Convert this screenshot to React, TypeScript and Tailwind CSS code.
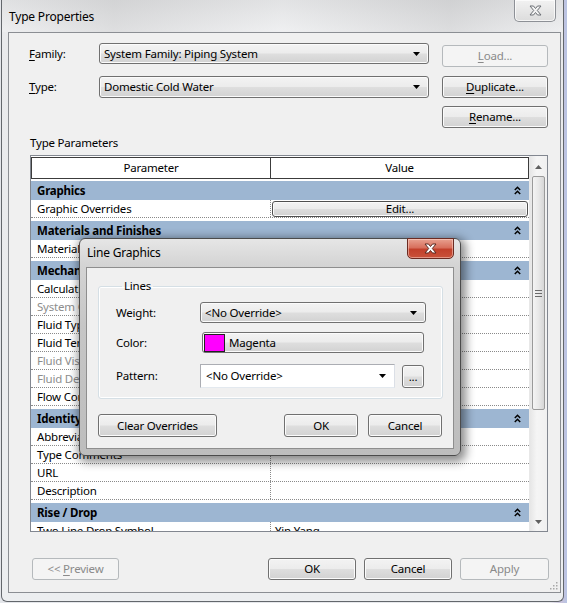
import React from "react";

const btn =
  "flex items-center justify-center rounded-[3px] border border-[#707070] bg-[linear-gradient(#f3f3f3_0%,#ececec_48%,#dedede_52%,#d2d2d2_100%)] shadow-[inset_0_0_0_1px_#fbfbfb] text-black";
const btnDisabled =
  "flex items-center justify-center rounded-[3px] border border-[#b5b9bc] bg-[#f4f4f4] text-[#8a8a8a]";
const combo =
  "flex items-center rounded-[3px] border border-[#707070] bg-[linear-gradient(#f3f3f3_0%,#ececec_48%,#dedede_52%,#d2d2d2_100%)] shadow-[inset_0_0_0_1px_#fbfbfb] text-black";

function Arrow() {
  return (
    <svg width="7" height="4" viewBox="0 0 7 4" className="shrink-0">
      <path d="M0 0 L7 0 L3.5 4 Z" fill="#000" />
    </svg>
  );
}

function Chevrons() {
  return (
    <svg width="7" height="9" viewBox="0 0 7 9" className="shrink-0">
      <path d="M0.8 4 L3.5 1.3 L6.2 4" fill="none" stroke="#000" strokeWidth="1.5" />
      <path d="M0.8 8 L3.5 5.3 L6.2 8" fill="none" stroke="#000" strokeWidth="1.5" />
    </svg>
  );
}

type Row = { name: string; value?: string; gray?: boolean; edit?: boolean };
type Group = { title: string; rows: Row[] };

const groups: Group[] = [
  { title: "Graphics", rows: [{ name: "Graphic Overrides", edit: true }] },
  { title: "Materials and Finishes", rows: [{ name: "Material", value: "<By Category>" }] },
  {
    title: "Mechanical",
    rows: [
      { name: "Calculations", value: "All" },
      { name: "System Classification", value: "Domestic Cold Water", gray: true },
      { name: "Fluid Type", value: "Water" },
      { name: "Fluid Temperature", value: "60 °F" },
      { name: "Fluid Viscosity", value: "0.00076 lbm/(ft·s)", gray: true },
      { name: "Fluid Density", value: "62.3663 lb/ft³", gray: true },
      { name: "Flow Conversion Method", value: "Predominantly Flush Tanks" },
    ],
  },
  {
    title: "Identity Data",
    rows: [
      { name: "Abbreviation", value: "" },
      { name: "Type Comments", value: "" },
      { name: "URL", value: "" },
      { name: "Description", value: "" },
    ],
  },
  { title: "Rise / Drop", rows: [{ name: "Two Line Drop Symbol", value: "Yin Yang" }] },
];

function CloseX({ fill, stroke }: { fill: string; stroke: string }) {
  return (
    <svg width="13" height="11" viewBox="0 0 13 11">
      <path
        d="M1 1 L4.5 1 L6.5 3.5 L8.5 1 L12 1 L8.3 5.5 L12 10 L8.5 10 L6.5 7.5 L4.5 10 L1 10 L4.7 5.5 Z"
        fill={fill}
        stroke={stroke}
        strokeWidth="1"
        strokeLinejoin="round"
      />
    </svg>
  );
}

function Table() {
  return (
    <div className="ml-[21px] mt-[4px] flex h-[377px] w-[518px] overflow-hidden border border-[#828790] bg-white">
      <div className="flex w-[498px] flex-col pt-[1px]">
        <div className="flex h-[22px] shrink-0 border border-[#3c3c3c] bg-white">
          <div className="flex w-[239px] items-center justify-center border-r border-[#3c3c3c]">Parameter</div>
          <div className="flex flex-1 items-center justify-center">Value</div>
        </div>
        {groups.map((g, gi) => (
          <div key={g.title} className={gi === 0 ? "pt-[2px]" : "pt-[3px]"}>
            <div className="flex h-[19px] items-center justify-between bg-[#9db6d2] pl-[6px] pr-[8px] font-bold">
              <span>{g.title}</span>
              <Chevrons />
            </div>
            {g.rows.map((r) => (
              <div key={r.name} className="flex h-[18px] border-b border-dotted border-[#8a8a8a]">
                <div
                  className={
                    "flex w-[240px] items-center overflow-hidden whitespace-nowrap border-r border-dotted border-[#8a8a8a] pl-[6px] " +
                    (r.gray ? "text-[#8d8d8d]" : "text-black")
                  }
                >
                  {r.name}
                </div>
                <div className="flex flex-1 items-center overflow-hidden whitespace-nowrap">
                  {r.edit ? (
                    <div className="flex h-full w-full p-[1px] pb-0">
                      <div className="flex flex-1 items-center justify-center rounded-[3px] border border-[#505050] bg-[linear-gradient(#f3f3f3_0%,#ececec_48%,#dedede_52%,#d2d2d2_100%)] shadow-[inset_0_0_0_1px_#fbfbfb]">
                        Edit...
                      </div>
                    </div>
                  ) : (
                    <span className={"pl-[4px] " + (r.gray ? "text-[#8d8d8d]" : "")}>{r.value}</span>
                  )}
                </div>
              </div>
            ))}
          </div>
        ))}
      </div>
      {/* scrollbar */}
      <div className="flex w-[18px] flex-col border-l border-[#e8e8e8] bg-[linear-gradient(90deg,#e6e6e6,#f5f5f5_40%,#f0f0f0)]">
        <div className="flex h-[20px] items-center justify-center pt-[2px]">
          <svg width="7" height="4" viewBox="0 0 7 4">
            <path d="M0 4 L7 4 L3.5 0 Z" fill="#606060" />
          </svg>
        </div>
        <div className="mx-[2px] flex h-[234px] items-center justify-center rounded-[2px] border border-[#9a9a9a] bg-[linear-gradient(90deg,#f4f4f4,#e8e8e8_50%,#d6d6d6)]">
          <svg width="7" height="7" viewBox="0 0 7 7">
            <path d="M0 0.5 H7 M0 3.5 H7 M0 6.5 H7" stroke="#6a6a6a" strokeWidth="1" />
          </svg>
        </div>
        <div className="flex flex-1 items-end justify-center pb-[7px]">
          <svg width="7" height="4" viewBox="0 0 7 4">
            <path d="M0 0 L7 0 L3.5 4 Z" fill="#606060" />
          </svg>
        </div>
      </div>
    </div>
  );
}

function LineGraphics() {
  return (
    <div className="absolute left-[79px] top-[238px] flex h-[218px] w-[382px] flex-col rounded-[6px] border border-[#4b4b4b] bg-[linear-gradient(180deg,#e6e6e6_0%,#d4d4d4_12%,#c6c6c6_40%,#bdbdbd_100%)] shadow-[2px_3px_10px_3px_rgba(0,0,0,0.45)]">
      <div className="relative flex h-[28px] shrink-0 items-center pl-[7px]">
        <span className="text-[12px]">Line Graphics</span>
        <div className="absolute right-[6px] top-[-1px] flex h-[21px] w-[47px] items-center justify-center rounded-b-[5px] border border-[#6b2b22] bg-[linear-gradient(#e8a190_0%,#d8705d_45%,#c2402b_55%,#c9523a_100%)] shadow-[inset_0_0_0_1px_rgba(255,220,210,0.5)]">
          <CloseX fill="#ffffff" stroke="#5a2a22" />
        </div>
      </div>
      <div className="mx-[6px] flex h-[182px] flex-col border border-[#8e8e8e] bg-[#f0f0f0] px-[11px]">
        <fieldset className="mt-[10px] h-[121px] rounded-[3px] border border-[#d5dfe5] pl-[17px] pr-[16px] shadow-[inset_0_0_0_1px_#ffffff]">
          <legend className="ml-[6px] px-[2px] leading-[16px]">Lines</legend>
          <div className="grid grid-cols-[84px_1fr] items-center">
            <div className="mt-[8px]">Weight:</div>
            <div className={combo + " mt-[8px] h-[21px] w-[226px] justify-between pl-[4px] pr-[8px]"}>
              <span>&lt;No Override&gt;</span>
              <Arrow />
            </div>
            <div className="mt-[9px]">Color:</div>
            <div className={combo + " ml-[2px] mt-[9px] h-[21px] w-[222px] pl-[1px]"}>
              <div className="h-[18px] w-[21px] border border-[#222] bg-[#ff00ff]" />
              <span className="ml-[4px]">Magenta</span>
            </div>
            <div className="mt-[11px]">Pattern:</div>
            <div className="mt-[11px] flex items-center">
              <div className="flex h-[24px] w-[195px] items-center justify-between border border-[#abadb3] border-b-[#e3e9ef] border-r-[#dbdfe6] bg-white pl-[5px] pr-[8px]">
                <span>&lt;No Override&gt;</span>
                <Arrow />
              </div>
              <div className={btn + " ml-[7px] h-[23px] w-[22px] items-end pb-[4px] leading-none"}>...</div>
            </div>
          </div>
        </fieldset>
        <div className="mt-[15px] flex">
          <div className={btn + " h-[23px] w-[119px]"}>Clear Overrides</div>
          <div className={btn + " ml-auto h-[23px] w-[74px]"}>OK</div>
          <div className={btn + " ml-[10px] h-[23px] w-[74px]"}>Cancel</div>
        </div>
      </div>
    </div>
  );
}

export default function App() {
  return (
    <div className="relative h-[603px] w-[567px] overflow-hidden bg-[linear-gradient(90deg,#e4e6ea_0%,#e8e9ec_97%,#c9c3dc_99%,#b8c4e4_100%)] font-['Noto_Sans',sans-serif] text-[11.5px] tracking-[-0.2px] text-black">
      <div className="ml-[1px] flex h-[602px] w-[563px] flex-col rounded-b-[6px] border border-t-0 border-[#63676c] bg-[linear-gradient(180deg,#d8d9db_0%,#e9eaec_5%,#eceef0_100%)]">
        {/* title bar */}
        <div className="relative flex h-[32px] shrink-0 items-center bg-[linear-gradient(90deg,rgba(255,255,255,0.2),rgba(200,200,200,0.35)_20%,rgba(255,255,255,0.25)_50%,rgba(190,190,190,0.3)_80%,rgba(255,255,255,0.2))] pb-[0px] pl-[7px] pt-[2px]">
          <span className="text-[12px]">Type Properties</span>
          <div className="absolute right-[7px] top-0 flex h-[22px] w-[42px] items-center justify-center rounded-b-[5px] border border-t-0 border-[#8d9096] bg-[linear-gradient(#f2f2f2,#dcdcdc)] shadow-[inset_0_0_0_1px_rgba(255,255,255,0.7)]">
            <CloseX fill="#f4f4f4" stroke="#6b6f74" />
          </div>
        </div>
        {/* client */}
        <div className="relative ml-[6px] flex h-[561px] w-[553px] flex-col border border-[#8b8e93] bg-[#f0f0f0]">
          <div className="flex pl-[20px] pr-[10px] pt-[10px]">
            <div className="flex w-[400px] flex-col">
              <div className="flex h-[21px] items-center">
                <span className="w-[70px]">
                  <span className="underline underline-offset-2">F</span>amily:
                </span>
                <div className={combo + " h-[21px] w-[330px] justify-between pl-[4px] pr-[8px]"}>
                  <span>System Family: Piping System</span>
                  <Arrow />
                </div>
              </div>
              <div className="mt-[12px] flex h-[22px] items-center">
                <span className="w-[70px]">
                  <span className="underline underline-offset-2">T</span>ype:
                </span>
                <div className={combo + " h-[22px] w-[330px] justify-between pl-[4px] pr-[8px]"}>
                  <span>Domestic Cold Water</span>
                  <Arrow />
                </div>
              </div>
            </div>
            <div className="ml-[13px] flex w-[106px] flex-col pt-[2px]">
              <div className={btnDisabled + " h-[22px]"}>
                <span>
                  <span className="underline underline-offset-2">L</span>oad...
                </span>
              </div>
              <div className={btn + " mt-[9px] h-[22px]"}>
                <span>
                  <span className="underline underline-offset-2">D</span>uplicate...
                </span>
              </div>
              <div className={btn + " mt-[8px] h-[22px]"}>
                <span>
                  <span className="underline underline-offset-2">R</span>ename...
                </span>
              </div>
            </div>
          </div>
          <div className="ml-[21px] mt-[7px] h-[16px] leading-[16px]">Type Parameters</div>
          <Table />
          <div className="mt-[26px] flex pl-[23px] pr-[11px]">
            <div className={btnDisabled + " h-[22px] w-[87px]"}>
              <span>
                &lt;&lt; <span className="underline underline-offset-2">P</span>review
              </span>
            </div>
            <div className={btn + " ml-auto h-[22px] w-[88px]"}>OK</div>
            <div className={btn + " ml-[8px] h-[22px] w-[88px]"}>Cancel</div>
            <div className={btnDisabled + " ml-[8px] h-[22px] w-[89px]"}>Apply</div>
          </div>
          <svg className="absolute bottom-[2px] right-[2px]" width="10" height="10" viewBox="0 0 10 10">
            <g fill="#a8a8a8">
              <rect x="8" y="2" width="1.5" height="1.5" />
              <rect x="5" y="5" width="1.5" height="1.5" />
              <rect x="8" y="5" width="1.5" height="1.5" />
              <rect x="2" y="8" width="1.5" height="1.5" />
              <rect x="5" y="8" width="1.5" height="1.5" />
              <rect x="8" y="8" width="1.5" height="1.5" />
            </g>
          </svg>
        </div>
      </div>
      <LineGraphics />
    </div>
  );
}
